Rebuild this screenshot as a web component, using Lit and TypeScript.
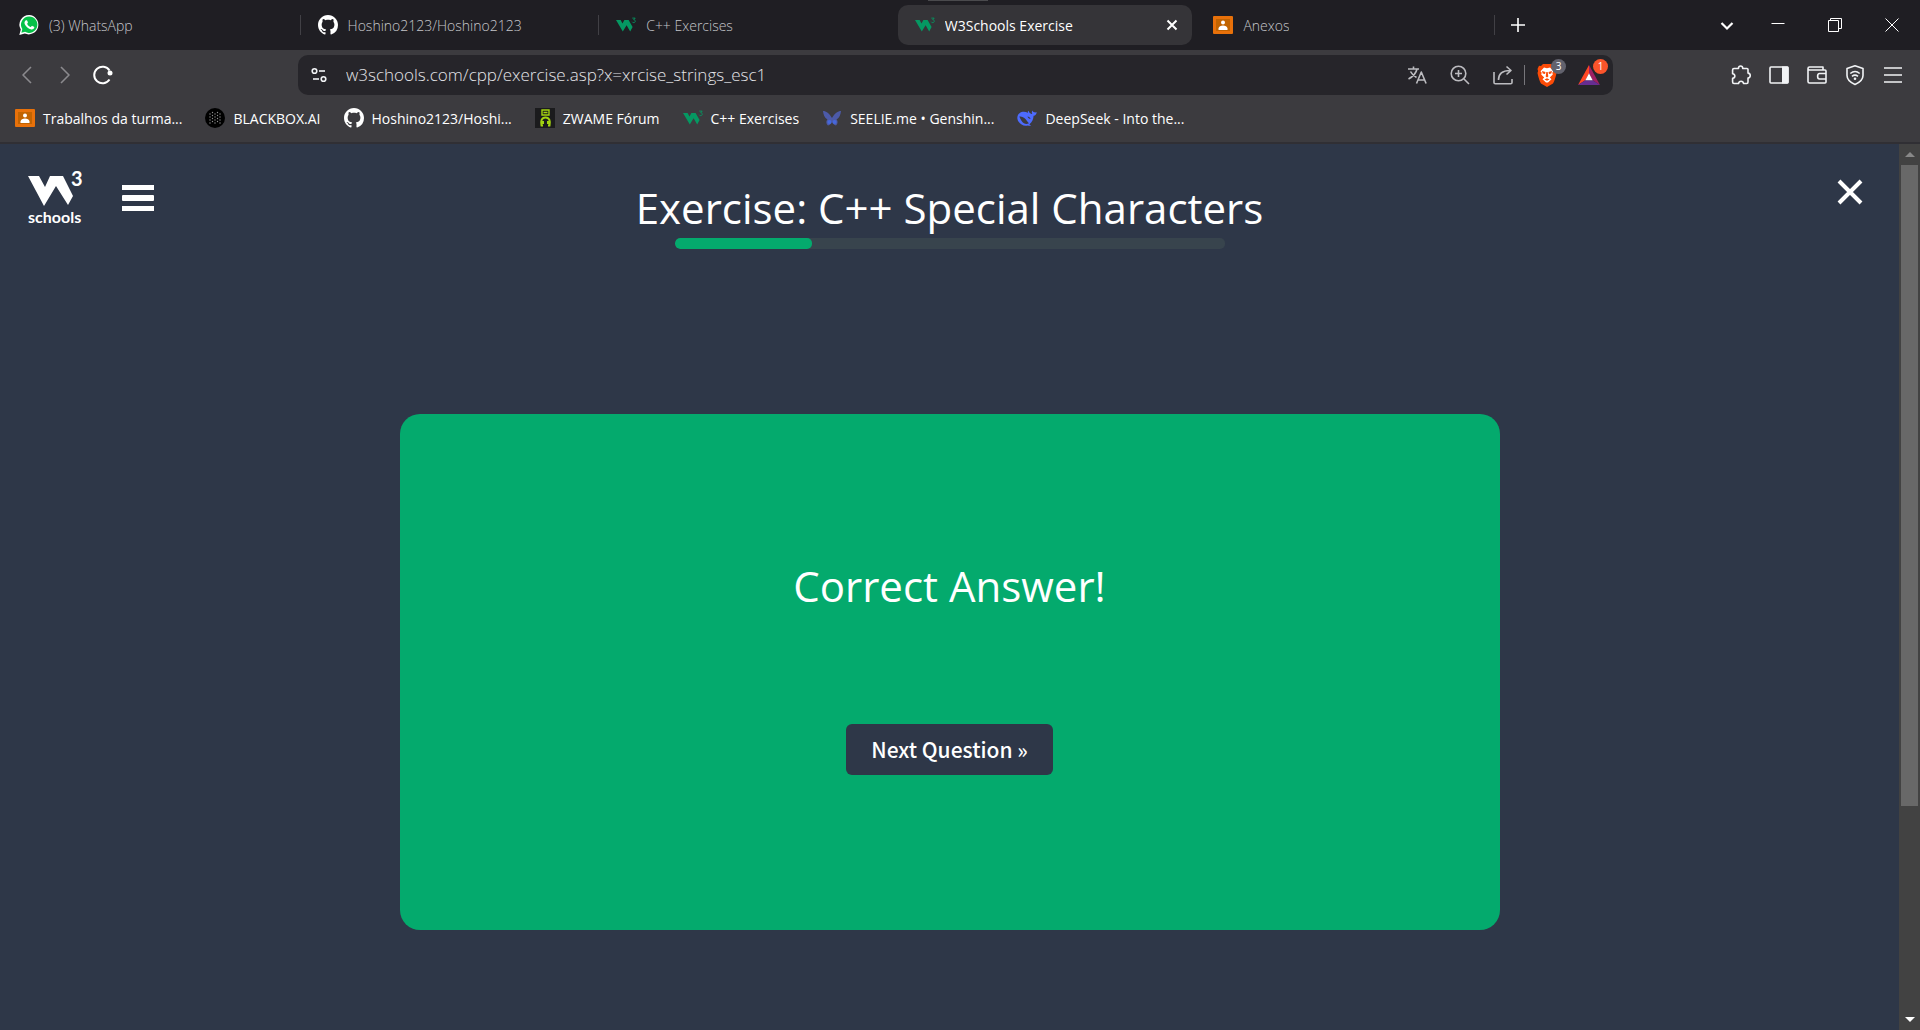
import { LitElement, html, css, svg, type TemplateResult } from "lit";
import { customElement } from "lit/decorators.js";
import { classMap } from "lit/directives/class-map.js";

const w3Mark = (color: string) => html`<svg width="20" height="20" viewBox="0 0 20 20" aria-hidden="true">
  <path d="M0 5h4.600l1.900 3.400L8.400 5h4.200l4 7-2.400 4.600-3.600-6.300-3.800 6.300z" fill=${color} />
  <path d="M16.300 3.100h2.900l-1.500 1.700c2.200 0 2 2.800 0 2.800-.8 0-1.200-.3-1.500-.8" fill="none" stroke=${color} stroke-width=".9" />
</svg>`;

const github = html`<svg width="20" height="20" viewBox="0 0 16 16" aria-hidden="true">
  <path fill="#fff" d="M8 0C3.580 0 0 3.580 0 8c0 3.540 2.290 6.530 5.470 7.590.4.070.55-.17.55-.38 0-.19-.01-.82-.01-1.490-2.010.37-2.530-.49-2.690-.94-.09-.23-.48-.94-.82-1.130-.28-.15-.68-.52-.01-.53.63-.01 1.080.58 1.230.82.72 1.210 1.870.87 2.330.66.07-.52.28-.87.51-1.070-1.780-.2-3.640-.89-3.640-3.950 0-.87.31-1.590.82-2.150-.08-.2-.36-1.020.08-2.120 0 0 .67-.21 2.200.82.64-.18 1.320-.27 2-.27s1.360.09 2 .27c1.530-1.040 2.200-.82 2.200-.82.44 1.100.16 1.920.08 2.120.51.56.82 1.270.82 2.150 0 3.070-1.870 3.750-3.650 3.950.29.25.54.73.54 1.480 0 1.070-.01 1.930-.01 2.200 0 .21.15.46.55.38A8.010 8.010 0 0 0 16 8c0-4.420-3.580-8-8-8z" />
</svg>`;

const whatsapp = html`<svg width="20" height="20" viewBox="0 0 20 20" aria-hidden="true">
  <path fill="#fff" d="M10.200 0A9.700 9.700 0 0 0 1.800 14.600L.3 20l5.500-1.400A9.700 9.700 0 1 0 10.200 0z" />
  <path fill="#06c148" d="M10.200 1.500A8.200 8.200 0 0 0 3.300 14.100l-.9 3.700 3.700-1A8.200 8.200 0 1 0 10.200 1.500z" />
  <path fill="#fff" d="M6.900 5.300c.5-.3 1-.2 1.200.2l.8 1.800c.1.400-.1.700-.6 1.300-.2.200-.1.400 0 .6.900 1.400 1.800 2.100 3.200 2.700.300.100.4 0 .6-.2.600-.8.800-1 1.200-.8l1.700.9c.4.200.4.600.2 1.200-.4 1.100-1.700 1.600-2.800 1.400-3.300-.7-5.300-2.600-6.600-5.200-.7-1.500-.2-3.100 1.100-3.900z" />
</svg>`;

const classroom = html`<svg width="20" height="20" viewBox="0 0 20 20" aria-hidden="true">
  <rect y="1" width="20" height="18" rx="1" fill="#e8710a" />
  <rect x="3" y="4" width="14" height="12" fill="#c26401" />
  <circle cx="10" cy="7.500" r="2" fill="#fff" />
  <path d="M5.500 15v-1.500c0-2 2.500-3 4.500-3s4.500 1 4.500 3V15z" fill="#fff" />
</svg>`;

const blackboxDots = [5, 7.500, 10, 12.500, 15].flatMap((x, i) =>
  (i % 2 ? [4.500, 7.500, 10.500, 13.500] : [6, 9, 12, 15]).map(
    (y) => svg`<circle cx=${x} cy=${y} r=".7" />`
  )
);
const blackbox = html`<svg width="20" height="20" viewBox="0 0 20 20" aria-hidden="true">
  <circle cx="10" cy="10" r="10" fill="#000" />
  <g fill="#8d8d8d">${blackboxDots}</g>
</svg>`;

const zwame = html`<svg width="20" height="20" viewBox="0 0 20 20" aria-hidden="true">
  <rect width="20" height="20" fill="#1b1b1d" />
  <g fill="none" stroke="#a3d310">
    <path stroke-width="1.400" d="M7 2h7v5H7zM8.500 4.500h4" />
    <path stroke-width="2" d="M8 17.500H6.500C5.500 13 6.500 9.500 10.500 9.500s5 3.500 4 8H13M8 13v3M13 13v3" />
  </g>
</svg>`;

const butterfly = html`<svg width="20" height="20" viewBox="0 0 20 20" aria-hidden="true">
  <path fill="#4c5aa8" d="M1 3c3 0 6.500 2.500 9 7 2.500-4.500 6-7 9-7-.3 3.500-1.500 7-4.500 8.500 1.500 1 1.500 4.500-.5 6-2-.5-3.500-2-4-4-.5 2-2 3.500-4 4-2-1.500-2-5-.5-6C2.500 10 1.300 6.500 1 3z" />
  <circle cx="7.500" cy="14" r="2" fill="#4668dc" /><circle cx="12.500" cy="14" r="2" fill="#4668dc" />
</svg>`;

const deepseek = html`<svg width="20" height="20" viewBox="0 0 20 20" aria-hidden="true">
  <path fill="#4d6bfe" d="M19.600 4c-1 .7-1.700.3-2.500.2-.8-.1-1.200-.8-1.300-1.700-1 .800-1.400 2.200-.5 3.400-.9.300-1.700-.4-2.300-.9-.8-.6-1.300-1-1.100-2.300-1.400.6-1.200 1.600-.8 2.300C8.500 3.500 5 3.300 2.500 5.200-.2 7.300-.2 11 1.600 13.800c1.900 3 5.800 4.800 9.200 3.600 1.200.6 2.500.6 3.200-.2-1.300-.2-1.400-.6-1.600-1 2.800-2 4-5 4.200-8.400C18.500 7.600 19.700 6 19.600 4z" />
  <path fill="#3c3b3f" d="M2.300 8.500c3.500-.6 6.200 1.700 7.900 4.800.4.700 1 1.500 1.800 1.900-3 1.600-5.500.1-7-1.800-1.200-1.600-1.900-3-2.700-4.900zM10.500 8.500c1.500 0 2.800 1 3 2.600-1.300-.3-2.600-1.100-3-2.600z" />
</svg>`;

const backIcon = html`<svg width="20" height="20" viewBox="0 0 20 20" aria-hidden="true"><path class="line dim" d="M14 2L6 10l8 8" /></svg>`;
const forwardIcon = html`<svg width="20" height="20" viewBox="0 0 20 20" aria-hidden="true"><path class="line dim" d="M6 2l8 8-8 8" /></svg>`;
const reloadIcon = html`<svg width="20" height="20" viewBox="0 0 20 20" aria-hidden="true"><path class="line thick" d="M16.500 14.500A8.300 8.300 0 1 1 16.500 5.500" /><circle cx="17" cy="8" r="2.500" fill="#fff" /></svg>`;
const tuneIcon = html`<svg width="16" height="16" viewBox="0 0 16 16" aria-hidden="true"><g class="line"><circle cx="3.500" cy="4" r="2.300" /><path d="M8 4h6" /><circle cx="12.500" cy="12" r="2.300" /><path d="M2 12h6" /></g></svg>`;
const translateIcon = html`<svg width="20" height="20" viewBox="0 0 20 20" aria-hidden="true"><g class="line soft"><path d="M1 4h11M6.500 1.500V4M10 4c-.8 4-4 7.500-8.500 10M3.500 6.500c1.500 3 3.500 4.500 6 6M9.500 18.500L14.300 7l4.800 11.500M11 15h6.500" /></g></svg>`;
const zoomIcon = html`<svg width="20" height="20" viewBox="0 0 20 20" aria-hidden="true"><g class="line soft"><circle cx="8.500" cy="8.500" r="7.300" /><path d="M14 14l5 5M8.500 5v7M5 8.500h7" /></g></svg>`;
const shareIcon = html`<svg width="20" height="20" viewBox="0 0 20 20" aria-hidden="true"><g class="line soft"><path d="M1 7v10.500c0 .8.500 1.300 1.300 1.300h15.400c.8 0 1.300-.5 1.300-1.300V14M5.500 15C5.500 9 9 5.500 17 5.500M13.500 1.500l4.500 4-4.500 4" /></g></svg>`;
const braveIcon = html`<svg width="20" height="23" viewBox="0 0 20 23" aria-hidden="true">
  <path fill="#fb4b07" d="M6 0h8l2 2 2-.3L19.500 5l-.6 2 .6 2c-1 4.500-2 8-3.500 10.500L10 23l-6-3.500C2.500 17 1.500 13.500.5 9l.6-2-.6-2L2 1.700 4 2z" />
  <path fill="#fff" d="M7 3.500l3 .7 3-.7 3.500 3.800-1.200 1.500.5 1.700-3 3 1.700 1.700-3.500 3.300h-2l-3.500-3.300 1.700-1.700-3-3 .5-1.700-1.200-1.500z" />
  <path fill="#fb4b07" d="M5 7l3.500 1-.5 2-2.300-.5zM15 7l-3.500 1 .5 2 2.300-.5zM9.300 8h1.400l.6 4.500-1.300 1-1.300-1zM7.500 15.500l2.500-1.200 2.500 1.200-2.500 1.300z" />
</svg>`;
const batIcon = html`<svg width="22" height="20" viewBox="0 0 22 20" aria-hidden="true">
  <path fill="#ff4724" d="M11 0L0 20l7.300-4.700L11 8.300z" />
  <path fill="#9e1f63" d="M11 0l11 20-7.300-4.700L11 8.300z" />
  <path fill="#662d91" d="M0 20h22l-7.300-4.700H7.300z" />
  <path fill="#fff" d="M11 8.300l3.700 7H7.300z" />
</svg>`;
const puzzleIcon = html`<svg width="20" height="20" viewBox="0 0 20 20" aria-hidden="true"><path class="line" d="M3 3.500h4.500C7 .2 12.200.2 11.700 3.500H16c.8 0 1 .3 1 1v3.600c3 .4 3 4.500 0 5V17c0 1-.3 1.500-1.200 1.500h-3.300c-.3-3-4.500-3-5 0H3c-.9 0-1.400-.4-1.400-1.400v-3.700c3-.3 3-4.300 0-4.700V5c0-1 .5-1.500 1.400-1.500z" /></svg>`;
const panelIcon = html`<svg width="20" height="20" viewBox="0 0 20 20" aria-hidden="true"><rect class="line" x="1" y="2" width="18" height="16" rx="1" /><path fill="#f1f3f5" d="M13 1.500h5.500c.6 0 1 .4 1 1v15c0 .6-.4 1-1 1H13z" /></svg>`;
const walletIcon = html`<svg width="20" height="20" viewBox="0 0 20 20" aria-hidden="true"><g class="line"><path d="M1 3.500c0-1 .5-1.500 1.500-1.500H16v3M1 3.500C1 4.500 1.500 5 2.500 5H18c.7 0 1 .3 1 1v11c0 .7-.3 1-1 1H2.500c-1 0-1.500-.5-1.500-1.500z" /><path d="M19 8.500h-6.500c-2.500 0-2.500 5.500 0 5.500H19" /></g></svg>`;
const vpnIcon = html`<svg width="20" height="20" viewBox="0 0 20 20" aria-hidden="true"><g class="line"><path d="M10 .8l8 2.700v7c0 4-3.500 7-8 9-4.500-2-8-5-8-9v-7z" /><path d="M5.300 8.500c3-2.500 6.500-2.500 9.400 0M7 11.300c2-1.600 4-1.600 6 0" /></g><circle cx="10" cy="13.800" r="1.300" fill="#f1f3f5" /></svg>`;
const menuIcon = html`<svg width="20" height="20" viewBox="0 0 20 20" aria-hidden="true"><path class="line" d="M1 3h18M1 10h18M1 17h18" /></svg>`;

interface Tab { title: string; icon: TemplateResult; active?: boolean; divided?: boolean }
interface Bookmark { title: string; icon: TemplateResult }

const tabs: Tab[] = [
  { title: "(3) WhatsApp", icon: whatsapp, divided: true },
  { title: "Hoshino2123/Hoshino2123", icon: github, divided: true },
  { title: "C++ Exercises", icon: w3Mark("#059862") },
  { title: "W3Schools Exercise", icon: w3Mark("#059862"), active: true },
  { title: "Anexos", icon: classroom, divided: true },
];

const bookmarks: Bookmark[] = [
  { title: "Trabalhos da turma...", icon: classroom },
  { title: "BLACKBOX.AI", icon: blackbox },
  { title: "Hoshino2123/Hoshi...", icon: github },
  { title: "ZWAME Fórum", icon: zwame },
  { title: "C++ Exercises", icon: w3Mark("#059862") },
  { title: "SEELIE.me • Genshin...", icon: butterfly },
  { title: "DeepSeek - Into the...", icon: deepseek },
];

const shared = css`
  :host { display: block; font-family: "Open Sans", "Noto Sans", sans-serif; }
  * { box-sizing: border-box; }
  button { margin: 0; padding: 0; border: 0; background: none; color: inherit; font: inherit; display: flex; align-items: center; justify-content: center; cursor: pointer; }
  a { color: inherit; text-decoration: none; }
  svg { display: block; flex: none; overflow: visible; }
  .line { fill: none; stroke: #f1f3f5; stroke-width: 1.6; stroke-linejoin: round; }
  .dim { stroke: #8b8a8e; }
  .soft { stroke: #bcbcc0; }
  .thick { stroke: #fff; stroke-width: 2; }
`;

@customElement("browser-tabs")
class BrowserTabs extends LitElement {
  static styles = [shared, css`
    .strip { display: flex; align-items: center; height: 50px; padding-left: 2px; background: #1f1e23; color: #c6c6ca; font-size: 14px; font-weight: 300; }
    .tabs { display: flex; flex: 0 1 1493px; min-width: 0; align-items: center; }
    .tab { display: flex; flex: 1 1 0; min-width: 0; align-items: center; height: 40px; position: relative; }
    .link { display: flex; flex: 1; min-width: 0; align-items: center; gap: 10px; height: 40px; padding: 0 17px; white-space: nowrap; }
    .name { overflow: hidden; }
    .active { color: #fff; font-weight: 400; }
    .active::before { content: ""; position: absolute; inset: 0 4px 0 0; border-radius: 10px; background: #353438; }
    .active::after { content: ""; position: absolute; top: -5px; left: 30px; width: 60px; height: 1px; background: #4a4a4d; }
    .active .link { position: relative; }
    .close { position: relative; width: 20px; height: 20px; margin-right: 14px; }
    .divided::after { content: ""; width: 1px; height: 20px; background: #414045; }
    .add { width: 30px; height: 30px; margin-left: 8px; color: #fff; }
    .system { display: flex; margin-left: auto; }
    .system button { width: 57px; height: 50px; }
    .system .search { width: 44px; }
    .white { fill: none; stroke: #fff; }
  `];
  render() {
    return html`<header class="strip">
      <nav class="tabs" aria-label="Tabs">
        ${tabs.map((t) => html`<div class=${classMap({ tab: true, active: !!t.active, divided: !!t.divided })}>
          <a class="link" href="#">${t.icon}<span class="name">${t.title}</span></a>
          ${t.active ? html`<button class="close" aria-label="Close tab"><svg width="12" height="12" viewBox="0 0 12 12"><path class="white" stroke-width="2" d="M1.500 1.500l9 9M10.500 1.500l-9 9" /></svg></button>` : ""}
        </div>`)}
      </nav>
      <button class="add" aria-label="New tab"><svg width="14" height="14" viewBox="0 0 14 14"><path class="white" stroke-width="1.600" d="M7 0v14M0 7h14" /></svg></button>
      <div class="system">
        <button class="search" aria-label="Search tabs"><svg width="14" height="14" viewBox="0 0 14 14"><path class="white" stroke-width="2.200" d="M1.500 5L7 10.500 12.500 5" /></svg></button>
        <button aria-label="Minimize"><svg width="14" height="14" viewBox="0 0 14 14"><path class="white" d="M.5 5.500h13" /></svg></button>
        <button aria-label="Restore"><svg width="14" height="14" viewBox="0 0 14 14"><path class="white" d="M.5 2.500h10v11H.500zM2.500 2.500v-2h11v10h-3" /></svg></button>
        <button aria-label="Close window"><svg width="14" height="14" viewBox="0 0 14 14"><path class="white" d="M.5.5l13 13M13.500.5l-13 13" /></svg></button>
      </div>
    </header>`;
  }
}

@customElement("browser-toolbar")
class BrowserToolbar extends LitElement {
  static styles = [shared, css`
    .toolbar { display: flex; align-items: center; height: 50px; background: #3c3b3f; }
    .history { display: flex; flex: 0 1 298px; gap: 18px; padding-left: 17px; min-width: 140px; }
    .address { display: flex; align-items: center; flex: 1; min-width: 0; height: 40px; padding: 0 13px; border-radius: 10px; background: #26252a; }
    .url { flex: 1; min-width: 0; height: 30px; margin-left: 19px; }
    .field { width: 100%; height: 30px; padding: 0; border: 0; outline: 0; background: none; color: #e4e4e8; font: 300 17px/30px "Open Sans", sans-serif; }
    .actions { display: flex; align-items: center; gap: 23px; }
    .rule { width: 1px; height: 20px; background: #77767b; margin: 0 -12px 0 -12px; }
    .extension { position: relative; width: 22px; height: 24px; }
    .badge { position: absolute; top: -4px; right: -8px; width: 15px; height: 15px; border-radius: 8px; background: #62626d; color: #fff; font-size: 10px; line-height: 15px; text-align: center; }
    .hot { background: #fb542b; }
    .shields { display: flex; gap: 20px; }
    .tools { display: flex; flex: 0 1 307px; justify-content: flex-end; gap: 18px; padding-right: 17px; }
  `];
  render() {
    return html`<div class="toolbar">
      <div class="history">
        <button aria-label="Back">${backIcon}</button>
        <button aria-label="Forward">${forwardIcon}</button>
        <button aria-label="Reload">${reloadIcon}</button>
      </div>
      <div class="address">
        <button aria-label="Site information">${tuneIcon}</button>
        <div class="url"><input class="field" aria-label="Address" .value=${"w3schools.com/cpp/exercise.asp?x=xrcise_strings_esc1"} /></div>
        <div class="actions">
          <button aria-label="Translate">${translateIcon}</button>
          <button aria-label="Zoom">${zoomIcon}</button>
          <button aria-label="Share">${shareIcon}</button>
          <span class="rule"></span>
          <div class="shields">
            <button class="extension" aria-label="Brave Shields">${braveIcon}<span class="badge">3</span></button>
            <button class="extension" aria-label="Brave Rewards">${batIcon}<span class="badge hot">1</span></button>
          </div>
        </div>
      </div>
      <div class="tools">
        <button aria-label="Extensions">${puzzleIcon}</button>
        <button aria-label="Sidebar">${panelIcon}</button>
        <button aria-label="Wallet">${walletIcon}</button>
        <button aria-label="VPN">${vpnIcon}</button>
        <button aria-label="Menu">${menuIcon}</button>
      </div>
    </div>`;
  }
}

@customElement("bookmark-bar")
class BookmarkBar extends LitElement {
  static styles = [shared, css`
    .bar { display: flex; align-items: center; gap: 23px; height: 44px; padding: 0 15px 6px; border-bottom: 2px solid #302f34; background: #3c3b3f; color: #fff; font-size: 14px; white-space: nowrap; overflow: hidden; }
    .item { display: flex; align-items: center; gap: 8px; }
  `];
  render() {
    return html`<nav class="bar" aria-label="Bookmarks">
      ${bookmarks.map((b) => html`<a class="item" href="#">${b.icon}<span>${b.title}</span></a>`)}
    </nav>`;
  }
}

@customElement("exercise-page")
class ExercisePage extends LitElement {
  static styles = [shared, css`
    :host { display: flex; flex: 1; min-height: 0; }
    .page { flex: 1; min-width: 0; background: #2e3748; color: #fff; }
    .top { display: grid; grid-template-columns: 1fr auto 1fr; align-items: start; padding: 28px 36px 0 28px; }
    .left { display: flex; gap: 40px; }
    .brand { display: block; width: 54px; }
    .school { display: block; font: 700 16px/14px Lato, sans-serif; }
    .three { font: 700 20px Lato, sans-serif; }
    .burger { margin-top: 13px; width: 32px; height: 26px; }
    .heading { display: flex; flex-direction: column; align-items: center; padding-left: 8px; }
    .title { margin: 0; padding-top: 6px; font-size: 42px; line-height: 60px; font-weight: 400; white-space: nowrap; }
    .meter { width: 550px; max-width: 100%; height: 11px; border-radius: 5px; background: #38444d; overflow: hidden; }
    .fill { height: 11px; border-radius: 5px; background: #04aa6d; }
    .dismiss { justify-self: end; margin-top: 7px; }
    .card { display: flex; flex-direction: column; align-items: center; gap: 102px; max-width: 1100px; margin: 165px auto 0; padding: 136px 24px 155px; border-radius: 20px; background: #04aa6d; }
    .result { margin: 0; font-size: 42px; line-height: 72px; font-weight: 400; }
    .next { height: 51px; padding: 0 25px 2px; border-radius: 6px; background: #2e3748; font: 500 21px/30px "Noto Sans CJK JP", sans-serif; }
    .scroll { display: flex; flex-direction: column; align-items: center; width: 21px; background: #424242; }
    .scroll button { width: 21px; height: 21px; }
    .track { flex: 1; width: 17px; }
    .thumb { width: 17px; height: 76%; background: #686868; }
  `];
  private progress = 25;
  render() {
    return html`<main class="page">
        <div class="top">
          <div class="left">
            <a class="brand" href="#" aria-label="W3Schools">
              <svg width="54" height="38" viewBox="0 0 54 38">
                <path fill="#fff" d="M0 4h11l6 11 5-11h13l10 20-5 9-12-19-12 20z" />
                <text class="three" x="43" y="14" fill="#fff">3</text>
              </svg>
              <span class="school">schools</span>
            </a>
            <button class="burger" aria-label="Open menu"><svg width="32" height="26" viewBox="0 0 32 26"><path fill="#fff" d="M0 0h32v5H0zM1 10h30a1 1 0 0 1 1 1v4a1 1 0 0 1-1 1H1a1 1 0 0 1-1-1v-4a1 1 0 0 1 1-1zM0 21h32v5H0z" /></svg></button>
          </div>
          <div class="heading">
            <h1 class="title">Exercise: C++ Special Characters</h1>
            <div class="meter" role="progressbar" aria-label="Exercise progress" aria-valuenow=${this.progress}>
              <div class="fill" style="width:${this.progress}%"></div>
            </div>
          </div>
          <button class="dismiss" aria-label="Close exercise"><svg width="26" height="26" viewBox="0 0 26 26"><path d="M2 2l22 22M24 2L2 24" fill="none" stroke="#fff" stroke-width="4" /></svg></button>
        </div>
        <section class="card">
          <h2 class="result">Correct Answer!</h2>
          <button class="next">Next Question »</button>
        </section>
      </main>
      <div class="scroll">
        <button aria-label="Scroll up"><svg width="10" height="6" viewBox="0 0 10 6"><path fill="#888" d="M5 0l5 5H0z" /></svg></button>
        <div class="track"><div class="thumb"></div></div>
        <button aria-label="Scroll down"><svg width="10" height="6" viewBox="0 0 10 6"><path fill="#fff" d="M0 0h10L5 5z" /></svg></button>
      </div>`;
  }
}

@customElement("app-root")
class AppRoot extends LitElement {
  static styles = css`
    :host { display: flex; flex-direction: column; min-height: 100vh; background: #2e3748; }
  `;
  render() {
    return html`<browser-tabs></browser-tabs>
      <browser-toolbar></browser-toolbar>
      <bookmark-bar></bookmark-bar>
      <exercise-page></exercise-page>`;
  }
}
